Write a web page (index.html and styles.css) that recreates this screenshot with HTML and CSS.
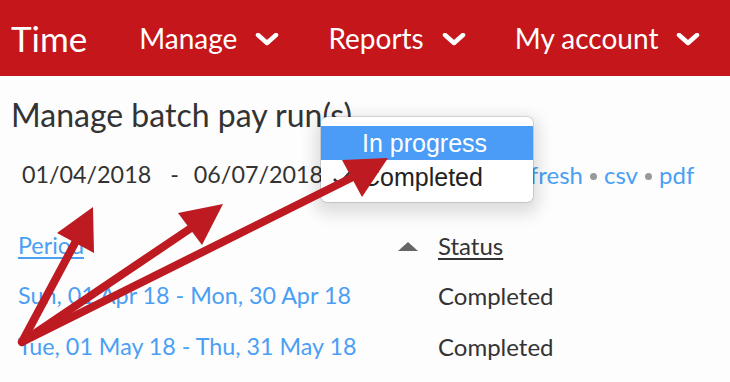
FILE: index.html
```html
<!DOCTYPE html>
<html lang="en">
<head>
    <meta charset="UTF-8">
    <meta name="viewport" content="width=device-width, initial-scale=1.0">
    <title>Manage batch pay run(s)</title>
    <link rel="stylesheet" href="styles.css">
</head>
<body>
    <header class="topbar">
        <div class="brand">Time</div>
        <nav class="menu">
            <a class="menu-item" href="#">Manage
                <svg class="chevron" viewBox="0 0 24 13"><polyline points="3,2 12,10 21,2"/></svg>
            </a>
            <a class="menu-item" href="#">Reports
                <svg class="chevron" viewBox="0 0 24 13"><polyline points="3,2 12,10 21,2"/></svg>
            </a>
            <a class="menu-item" href="#">My account
                <svg class="chevron" viewBox="0 0 24 13"><polyline points="3,2 12,10 21,2"/></svg>
            </a>
        </nav>
    </header>

    <main class="page">
        <h1 class="page-title">Manage batch pay run(s)</h1>

        <!-- filtros de fecha y estado -->
        <div class="filters">
            <span class="date">01/04/2018</span>
            <span class="dash">-</span>
            <span class="date">06/07/2018</span>
            <div class="status-select">
                <span class="status-value">Completed</span>
                <ul class="select-popup">
                    <li class="popup-option is-active">In progress</li>
                    <li class="popup-option">
                        <svg class="check" viewBox="0 0 20 16"><polyline points="2,9 7,14 18,2"/></svg>
                        Completed
                    </li>
                </ul>
            </div>
            <div class="actions">
                <a href="#">Refresh</a><span class="sep"></span><a href="#">csv</a><span class="sep"></span><a href="#">pdf</a>
            </div>
        </div>

        <table class="runs">
            <thead>
                <tr>
                    <th class="col-period"><a href="#">Period</a></th>
                    <th class="col-sort"><span class="sort-up"></span></th>
                    <th class="col-status"><a href="#">Status</a></th>
                </tr>
            </thead>
            <tbody>
                <tr>
                    <td class="col-period"><a href="#">Sun, 01 Apr 18 - Mon, 30 Apr 18</a></td>
                    <td class="col-sort"></td>
                    <td class="col-status">Completed</td>
                </tr>
                <tr>
                    <td class="col-period"><a href="#">Tue, 01 May 18 - Thu, 31 May 18</a></td>
                    <td class="col-sort"></td>
                    <td class="col-status">Completed</td>
                </tr>
            </tbody>
        </table>
    </main>

    <!-- flechas de anotación -->
    <svg class="annotations" viewBox="0 0 730 382">
        <line x1="22" y1="342" x2="76" y2="241"/>
        <polygon points="93,207 57,233 94,253"/>
        <line x1="22" y1="342" x2="191" y2="228"/>
        <polygon points="223,204 178,213 202,245"/>
        <line x1="22" y1="342" x2="353" y2="177"/>
        <polygon points="388,158 342,160 362,197"/>
    </svg>
</body>
</html>
```

FILE: styles.css
```css
body {
    font-family: Lato, "Open Sans", sans-serif;
    background-color: #fdfdfd;
    color: #333;
    margin: 0;
    position: relative;
    width: 730px;
    height: 382px;
    overflow: hidden;
}
a {
    color: #4a9ff5;
    text-decoration: none;
}
.topbar {
    display: flex;
    align-items: center;
    height: 76px;
    background-color: #c4161b;
    color: #fff;
}
.brand {
    font-size: 35px;
    padding-left: 11px;
    margin-right: 52px;
}
.menu {
    display: flex;
    align-items: center;
}
.menu-item {
    display: flex;
    align-items: center;
    flex-shrink: 0;
    white-space: nowrap;
    color: #fff;
    font-size: 28px;
    margin-right: 49px;
}
.chevron {
    width: 24px;
    height: 13px;
    margin-left: 18px;
    margin-top: 2px;
    fill: none;
    stroke: #fff;
    stroke-width: 4.5;
    stroke-linecap: round;
    stroke-linejoin: round;
}
.page {
    padding: 0 11px;
}
.page-title {
    font-size: 32px;
    font-weight: 400;
    line-height: 38px;
    margin: 20px 0 26px;
}
.filters {
    display: flex;
    align-items: center;
    font-size: 23.3px;
    line-height: 29px;
    padding-left: 11px;
}
.date {
    margin-right: 19px;
}
.dash {
    margin-right: 15px;
}
.status-select {
    position: relative;
    width: 161px;
    margin-left: -19px;
    padding-left: 19px;
}
.select-popup {
    position: absolute;
    left: -2px;
    top: -43px;
    width: 212px;
    height: 85px;
    box-sizing: border-box;
    margin: 0;
    padding: 9px 0 0;
    list-style: none;
    background-color: #fff;
    border-radius: 6px;
    box-shadow: 0 0 0 1px rgba(0, 0, 0, 0.12), 0 6px 16px 6px rgba(0, 0, 0, 0.13);
    font-family: "Liberation Sans", Arial, sans-serif;
    font-size: 25px;
    color: #222;
    z-index: 2;
}
.popup-option {
    position: relative;
    height: 34px;
    line-height: 34px;
    padding-left: 41px;
}
.popup-option.is-active {
    background-color: #4a9cf7;
    color: #fff;
}
.check {
    position: absolute;
    left: 11px;
    top: 10px;
    width: 20px;
    height: 16px;
    fill: none;
    stroke: #333;
    stroke-width: 2.5;
}
.actions {
    display: flex;
    align-items: baseline;
    font-size: 24px;
}
.sep {
    display: inline-block;
    width: 7px;
    height: 7px;
    border-radius: 50%;
    background-color: #999;
    margin: 0 7px;
    align-self: center;
    position: relative;
    top: 2px;
}
.runs {
    border-collapse: collapse;
    margin: 31px 0 0 7px;
    font-size: 24px;
    line-height: 29px;
}
.runs th,
.runs td {
    padding: 10px 0 11px;
    text-align: left;
    font-weight: 400;
}
.runs tbody td {
    padding: 9px 0 12px;
}
.runs th a {
    text-decoration: underline;
    text-underline-offset: 3px;
}
.col-period {
    width: 380px;
}
.col-period a {
    font-size: 23.3px;
}
.col-sort {
    width: 40px;
}
.col-status a {
    color: #333;
}
.sort-up {
    display: inline-block;
    width: 0;
    height: 0;
    border-left: 10px solid transparent;
    border-right: 10px solid transparent;
    border-bottom: 9px solid #666;
    vertical-align: 4px;
}
.annotations {
    position: absolute;
    left: 0;
    top: 0;
    width: 730px;
    height: 382px;
    pointer-events: none;
    z-index: 5;
}
.annotations line {
    stroke: #be1a21;
    stroke-width: 8;
    stroke-linecap: round;
}
.annotations polygon {
    fill: #be1a21;
}
```
